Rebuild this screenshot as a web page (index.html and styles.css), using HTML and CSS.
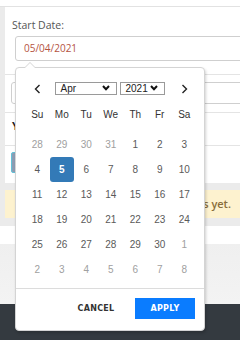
FILE: index.html
```html
<!DOCTYPE html>
<html lang="en">

<head>
    <meta charset="UTF-8">
    <meta name="viewport" content="width=device-width, initial-scale=1.0">
    <title>Start Date</title>
    <link rel="stylesheet" href="styles.css">
</head>

<body>
    <div class="topbar"></div>

    <div class="shell">
        <div class="strip"></div>
        <div class="main">
            <div class="card">
                <label class="field-label">Start Date:</label>
                <div class="input date-input">05/04/2021</div>
                <div class="rule rule-first"></div>
                <div class="input plain-input"></div>
                <div class="rule rule-second"></div>
                <div class="section-title">Y<span class="accent">o</span></div>
                <div class="rule rule-third"></div>
                <button class="btn-muted"></button>
            </div>
            <div class="band"></div>
            <div class="alert">No notes yet.</div>
            <div class="band"></div>
        </div>
    </div>

    <div class="white-row"></div>
    <div class="gray-zone"></div>
    <div class="footer"></div>

    <!-- date picker popup -->
    <div class="picker">
        <div class="cal-head">
            <span class="nav">
                <svg width="7" height="10" viewBox="0 0 7 10"><path d="M5.5 1 L1.5 5 L5.5 9" fill="none" stroke="#222" stroke-width="1.4"/></svg>
            </span>
            <div class="selects">
                <div class="fake-select month">Apr
                    <svg width="8" height="6" viewBox="0 0 8 6"><path d="M1 1 L4 4.2 L7 1" fill="none" stroke="#111" stroke-width="2"/></svg>
                </div>
                <div class="fake-select year">2021
                    <svg width="8" height="6" viewBox="0 0 8 6"><path d="M1 1 L4 4.2 L7 1" fill="none" stroke="#111" stroke-width="2"/></svg>
                </div>
            </div>
            <span class="nav">
                <svg width="7" height="10" viewBox="0 0 7 10"><path d="M1.5 1 L5.5 5 L1.5 9" fill="none" stroke="#222" stroke-width="1.4"/></svg>
            </span>
        </div>

        <div class="cal-grid week">
            <span>Su</span><span>Mo</span><span>Tu</span><span>We</span><span>Th</span><span>Fr</span><span>Sa</span>
        </div>

        <div class="cal-grid days">
            <span class="off">28</span><span class="off">29</span><span class="off">30</span><span class="off">31</span><span>1</span><span>2</span><span>3</span>
            <span>4</span><span class="active">5</span><span>6</span><span>7</span><span>8</span><span>9</span><span>10</span>
            <span>11</span><span>12</span><span>13</span><span>14</span><span>15</span><span>16</span><span>17</span>
            <span>18</span><span>19</span><span>20</span><span>21</span><span>22</span><span>23</span><span>24</span>
            <span>25</span><span>26</span><span>27</span><span>28</span><span>29</span><span>30</span><span class="off">1</span>
            <span class="off">2</span><span class="off">3</span><span class="off">4</span><span class="off">5</span><span class="off">6</span><span class="off">7</span><span class="off">8</span>
        </div>

        <div class="cal-foot">
            <button class="btn-cancel">CANCEL</button>
            <button class="btn-apply">APPLY</button>
        </div>
    </div>
</body>

</html>
```

FILE: styles.css
```css
body {
    margin: 0;
    width: 240px;
    height: 340px;
    overflow: hidden;
    position: relative;
    background-color: #fff;
    font-family: "Open Sans", Arial, sans-serif;
    color: #555;
}

.topbar {
    height: 6px;
    border-bottom: 1px solid #e2e2e2;
}

.shell {
    display: flex;
}

.strip {
    width: 5px;
    background-color: #ebebeb;
}

.main {
    flex: 1;
    min-width: 0;
}

.card {
    background-color: #fff;
    padding: 11px 0 10px 7px;
    overflow: hidden;
}

.field-label {
    display: block;
    font-size: 10.5px;
    line-height: 14px;
    color: #555;
}

.input {
    box-sizing: border-box;
    border: 1px solid #cfcfcf;
    border-radius: 3px;
    width: 260px;
}

.date-input {
    margin: 4px 0 0 3px;
    height: 25px;
    line-height: 23px;
    padding-left: 8px;
    font-size: 10px;
    color: #b5533f;
}

.rule {
    border-top: 1px solid #e4e4e4;
    margin-left: -7px;
}

.rule-first {
    margin-top: 13px;
}

.plain-input {
    margin: 7px 0 0 -1px;
    height: 22px;
}

.rule-second {
    margin-top: 8px;
}

.section-title {
    margin-top: 6px;
    line-height: 14px;
    font-size: 11px;
    font-weight: bold;
    color: #222;
}

.section-title .accent {
    color: #e39b2b;
}

.rule-third {
    margin-top: 12px;
}

.btn-muted {
    display: block;
    margin: 6px 0 0 -1px;
    height: 21px;
    width: 80px;
    border: 1px solid #62c2d8;
    border-radius: 2px;
    background-color: #8d9db4;
}

.band {
    height: 7px;
    background-color: #ebebeb;
}

.band:last-child {
    height: 8px;
}

.alert {
    height: 28px;
    line-height: 28px;
    background-color: #fdf2cf;
    color: #8a6d3b;
    font-size: 11px;
    font-weight: 600;
    text-align: right;
    padding-right: 9px;
    white-space: nowrap;
}

.white-row {
    height: 18px;
    background-color: #fff;
}

.gray-zone {
    height: 60px;
    background: linear-gradient(#efefef, #f3f3f3);
}

.footer {
    height: 38px;
    background-color: #343a40;
}

/* picker */
.picker {
    position: absolute;
    left: 15px;
    top: 67px;
    width: 190px;
    height: 264px;
    box-sizing: border-box;
    background-color: #fff;
    border: 1px solid #d4d4d4;
    border-radius: 4px;
    box-shadow: 1px 2px 3px rgba(0, 0, 0, 0.18);
    padding: 12px 0 0 9px;
    font-family: "Liberation Sans", Arial, sans-serif;
}

.picker::before {
    content: "";
    position: absolute;
    left: 8px;
    top: -6px;
    border-left: 6px solid transparent;
    border-right: 6px solid transparent;
    border-bottom: 6px solid #d4d4d4;
}

.picker::after {
    content: "";
    position: absolute;
    left: 9px;
    top: -5px;
    border-left: 5px solid transparent;
    border-right: 5px solid transparent;
    border-bottom: 5px solid #fff;
}

.cal-head {
    display: flex;
    align-items: center;
    width: 171.5px;
    height: 16px;
}

.nav {
    width: 24.5px;
    display: flex;
    justify-content: center;
    padding-top: 2px;
}

.selects {
    flex: 1;
    display: flex;
    gap: 3px;
    padding-left: 5px;
}

.fake-select {
    box-sizing: border-box;
    height: 13px;
    border: 1px solid #9a9a9a;
    font-size: 10px;
    line-height: 11px;
    color: #222;
    padding-left: 5px;
    display: flex;
    align-items: center;
    justify-content: space-between;
    padding-right: 6px;
}

.fake-select.month {
    width: 62px;
}

.fake-select.year {
    width: 45px;
}

.cal-grid {
    display: grid;
    grid-template-columns: repeat(7, 24.5px);
    text-align: center;
    font-size: 10px;
}

.cal-grid span {
    height: 25px;
    line-height: 25px;
}

.week {
    margin-top: 6px;
    color: #333;
}

.days {
    margin-top: 5px;
    color: #5a5a5a;
}

.days .off {
    color: #a0a0a0;
}

.days .active {
    background-color: #337ab7;
    color: #fff;
    font-weight: bold;
    border-radius: 3px;
}

.cal-foot {
    position: absolute;
    left: 0;
    right: 0;
    bottom: 0;
    height: 39px;
    border-top: 1px solid #dcdcdc;
    display: flex;
    align-items: center;
    justify-content: flex-end;
    gap: 9px;
    padding: 0 9px 2px 0;
}

.cal-foot button {
    width: 60px;
    height: 21px;
    border: 0;
    font-family: "DejaVu Sans", sans-serif;
    font-size: 8px;
    font-weight: bold;
    letter-spacing: 0.3px;
    padding: 0;
}

.btn-cancel {
    background: none;
    color: #333;
}

.btn-apply {
    background-color: #0a7cff;
    color: #fff;
}
```
